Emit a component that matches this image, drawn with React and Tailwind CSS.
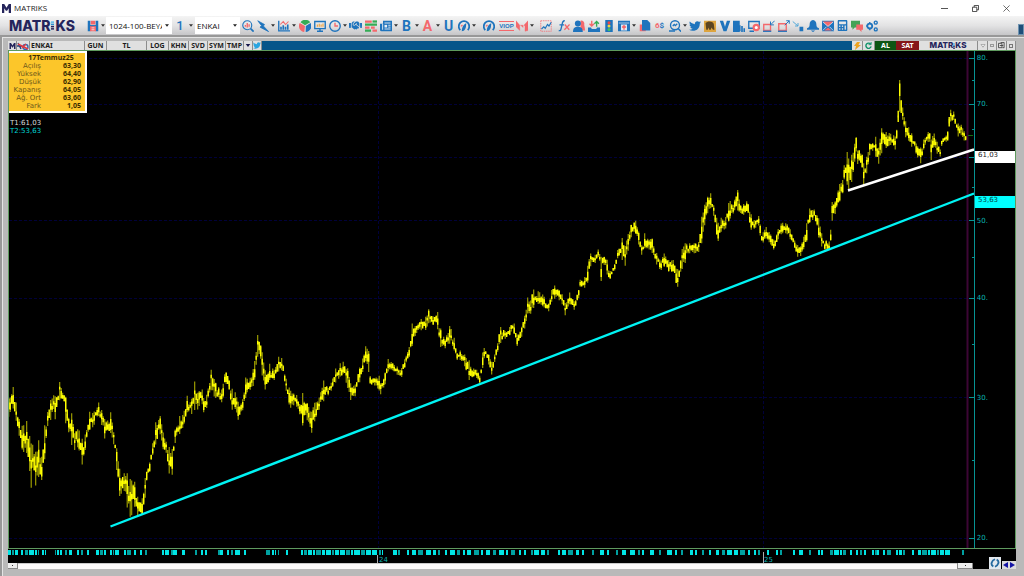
import React from "react";
import { FaHandshake, FaTwitter, FaBell, FaCalculator, FaNewspaper } from "react-icons/fa";

const BLUE = "#1f74bd";
const RED = "#f4686c";

/* Price ranges traced in thirds of a pixel: [x, high, low] relative to each section's origin. */
const SECTIONS = [
  { x: 0, y: 330, points: [[26,205,260],[40,170,235],[48,215,270],[58,270,320],[68,290,365],[82,270,370],[93,340,480],[99,345,400],[106,370,470],[115,325,440],[125,380,450],[133,290,400],[142,250,290],[152,210,270],[160,195,230],[167,200,278],[172,195,230],[181,145,215],[190,185,210],[197,200,280],[207,270,310],[215,250,345],[224,310,360],[235,295,350],[248,330,410],[257,310,350],[268,245,300],[280,250,290],[295,215,255],[305,240,285],[315,270,330],[322,275,300],[331,240,305],[343,320,350],[351,360,430],[361,430,515],[372,430,480],[382,430,535],[392,450,565],[404,455,530],[412,500,560],[427,505,555],[436,440,500],[442,405,455],[452,370,410],[458,340,375],[468,270,340],[480,255,310],[490,310,360],[500,340,370],[507,350,430],[516,360,440],[525,300,340],[540,255,310],[550,255,290],[562,195,245],[573,220,255],[583,150,240],[592,190,240],[605,170,215],[612,210,252],[622,190,230],[633,118,180],[645,155,205],[655,170,200],[667,180,220],[676,110,170],[685,130,170],[695,175,240],[705,185,235],[716,220,275],[727,215,245],[738,135,200],[750,145,180],[762,110,165],[773,15,80],[780,25,85],[787,70,140],[797,130,185],[808,100,150],[823,120,150],[835,80,125],[847,85,120],[858,145,180],[870,180,235],[880,190,225],[890,195,230],[900,225,255],[909,185,290],[922,220,270],[935,245,308],[945,215,270],[957,205,240],[970,150,215],[985,175,195],[995,155,180],[1005,115,160],[1017,120,145]] },
  { x: 340, y: 200, points: [[0,490,530],[10,485,520],[22,500,560],[32,550,600],[45,555,590],[58,505,550],[67,480,520],[76,437,480],[87,455,520],[92,535,560],[103,535,555],[117,525,570],[122,550,583],[135,520,555],[143,475,515],[157,490,510],[172,500,525],[183,510,537],[195,475,500],[208,440,470],[216,370,440],[228,380,400],[245,355,390],[257,350,390],[266,328,370],[280,350,375],[292,330,380],[300,380,440],[315,420,445],[330,375,430],[342,410,450],[350,460,480],[362,450,480],[375,465,500],[387,480,540],[400,505,530],[412,510,535],[420,530,552],[427,460,510],[434,440,465],[445,460,490],[457,490,530],[465,460,480],[473,430,455],[481,380,430],[497,395,415],[510,380,405],[521,365,395],[532,405,440],[545,380,410],[556,340,380],[562,290,340],[570,310,345],[580,268,325],[597,275,310],[610,285,320],[625,315,337],[635,270,305],[645,255,295],[657,270,300],[668,285,315],[675,310,347],[690,275,310],[703,305,330],[716,270,295],[719,240,260],[733,235,265],[745,190,245],[750,160,200],[765,165,190],[775,148,170],[780,165,185],[783,170,252],[786,170,200],[793,170,195],[802,180,225],[809,215,240],[825,190,210],[833,150,175],[847,113,180],[855,140,200],[865,100,150],[875,70,105],[887,62,100],[895,90,130],[906,140,168],[914,100,145],[925,120,145],[937,115,160],[948,155,190],[962,185,212],[972,160,200],[985,180,215],[1000,180,215],[1012,210,265],[1022,180,215]] },
  { x: 640, y: 70, points: [[125,540,600],[135,520,580],[148,520,550],[165,520,550],[178,515,545],[185,440,520],[195,400,460],[203,380,430],[212,370,415],[222,410,440],[229,440,490],[235,460,515],[245,440,480],[255,450,480],[268,390,450],[280,405,430],[291,350,420],[303,410,430],[313,400,435],[322,390,435],[332,430,480],[345,455,475],[358,435,465],[363,480,530],[368,490,520],[378,470,505],[390,490,520],[402,510,540],[413,480,510],[425,458,490],[440,460,490],[452,480,510],[463,510,530],[473,525,560],[480,535,562],[490,505,540],[500,460,515],[508,415,460],[518,420,450],[524,405,450],[535,440,500],[547,500,535],[557,510,540],[568,515,540],[573,470,505],[577,385,445],[587,395,430],[597,345,400],[608,330,370],[614,270,350],[620,240,340],[627,270,360],[637,250,330],[646,185,265],[655,225,290],[665,240,310],[671,280,345],[680,260,310],[690,215,250],[700,220,240],[707,200,260],[715,240,285],[725,175,250],[737,185,235],[750,190,225],[760,195,225],[766,200,240],[773,115,200],[779,30,125],[786,90,160],[795,150,200],[805,170,210],[815,190,230],[828,220,250],[841,235,285],[850,210,240],[865,185,215],[870,190,215],[873,210,275],[877,200,235],[883,190,230],[893,220,255],[901,240,260],[906,205,220],[920,195,215],[925,150,215],[930,118,155],[942,125,150],[953,160,200],[965,165,195],[975,190,225],[980,190,210]] },
];

const PRICES = SECTIONS.flatMap((s) => s.points.map(([x, hi, lo]) => [s.x + x / 3, s.y + hi / 3, s.y + lo / 3]));

function buildBars() {
  let seed = 7;
  const rnd = () => {
    seed = (seed * 16807) % 2147483647;
    return seed / 2147483647;
  };
  let wicks = "";
  let bodies = "";
  let k = 0;
  for (let x = PRICES[0][0]; x < PRICES[PRICES.length - 1][0]; x += 1.5) {
    while (k < PRICES.length - 2 && PRICES[k + 1][0] < x) k++;
    const [ax, ah, al] = PRICES[k];
    const [bx, bh, bl] = PRICES[k + 1];
    const t = Math.min(1, Math.max(0, (x - ax) / (bx - ax)));
    const near = t < 0.22 || t > 0.78;
    const hi = ah + (bh - ah) * t;
    const lo = al + (bl - al) * t;
    const size = lo - hi;
    const top = hi + (near ? 0 : rnd() * 0.5 * size);
    const bottom = lo - (near ? 0 : rnd() * 0.5 * size);
    const mid = top + (bottom - top) * (0.3 + rnd() * 0.4);
    const half = size * (0.04 + rnd() * 0.22) + 0.6;
    wicks += `M${x.toFixed(1)} ${top.toFixed(1)}V${bottom.toFixed(1)}`;
    bodies += `M${x.toFixed(1)} ${(mid - half).toFixed(1)}V${(mid + half).toFixed(1)}`;
  }
  return { wicks, bodies };
}
const BARS = buildBars();

const priceY = (p) => 57.5 + 346.25 * Math.log(80 / p);
const fromTop = (y) => ({ top: `${((y - 51) / 497) * 100}%` });
const MAJOR = [80, 70, 60, 50, 40, 30, 20];
const MINOR = [75, 65, 55, 45, 35, 25];

const SIGNALS = [
  [8,3],[12,2],[15,3],[21,2],[25,3],[29,5],[35,2],[38,1],[42,2],[45,1],[55,1],[57,2],[60,2],[65,2],[69,3],[77,2],[81,2],[87,2],[96,3],[100,3],[104,2],[110,2],[113,1],[115,4],[124,2],[127,4],[134,2],[140,2],[145,2],[162,2],[165,4],[171,2],[173,4],[182,3],[195,2],[201,2],[205,2],[218,2],[220,3],[227,2],[231,2],[235,5],[244,2],[266,4],[272,2],[275,1],[278,1],[286,2],
  [301,2],[304,3],[308,4],[313,2],[316,5],[322,3],[326,5],[332,2],[335,4],[340,5],[346,4],[351,2],[354,6],[361,4],[366,5],[372,5],[379,2],[382,1],[393,4],[398,2],
  [407,2],[412,4],[418,5],[426,5],[433,3],[438,2],[445,2],[450,5],[457,3],[463,2],[467,4],[474,5],[481,2],[486,4],[493,3],[499,5],[506,2],[511,4],[519,2],[524,2],[531,2],[534,5],[541,4],[547,2],[558,2],[562,4],[568,5],[576,3],[582,2],[592,2],[600,4],[607,2],[616,2],[622,4],[630,5],[638,2],[642,2],[650,4],[659,2],[667,5],[675,2],[681,2],[690,3],[695,2],[702,2],[709,2],[716,3],[722,3],[727,5],[734,4],[740,5],[748,2],[754,2],[758,2],
  [767,2],[776,2],[780,2],[793,2],[799,4],[809,2],[818,2],[821,2],[830,3],[834,5],[840,2],[843,3],[850,2],[856,2],[860,2],[864,2],[872,2],[875,2],[877,2],[883,2],[887,4],[896,2],[899,3],[903,2],[912,2],[918,3],[922,5],[928,2],[931,5],[937,2],[940,4],[945,5],[962,2],
];

function Svg({ children }) {
  return (
    <svg viewBox="0 0 16 16" className="h-3 w-3 shrink-0" fill="none" stroke={BLUE} strokeWidth="1.8" aria-hidden="true">
      {children}
    </svg>
  );
}

function Tool({ label, caret, children }) {
  return (
    <>
      <button type="button" aria-label={label} className="flex h-full w-[15px] shrink-0 items-center justify-center">
        {children}
      </button>
      {caret && <Caret label={label} />}
    </>
  );
}

function Caret({ label }) {
  return (
    <button type="button" aria-label={`${label} menu`} className="flex h-full w-[6px] shrink-0 items-center justify-center">
      <svg viewBox="0 0 6 4" className="h-[3px] w-1" fill="#333"><path d="M0 0h6L3 4z" /></svg>
    </button>
  );
}

function Logo({ small }) {
  return (
    <span role="img" aria-label="MATRIKS" className={small ? "flex items-center font-[Inter,sans-serif] text-[8px] leading-[9px] font-extrabold text-[#25255c]" : "flex items-center font-[Inter,sans-serif] text-[14px] leading-4 font-extrabold text-[#25255c]"}>
      MATR
      <svg viewBox="0 0 4 11" className={small ? "h-[6px] w-[2px]" : "mx-px h-[11px] w-[3px]"}>
        <path d="M0 0h4v2H0z" fill="#56b7e8" /><path d="M0 3h4v2H0z" fill="#2a8fd0" />
        <path d="M0 6h4v2H0z" fill="#25255c" /><path d="M0 9h4v2H0z" fill="#25255c" />
      </svg>
      KS
    </span>
  );
}

function MMark({ className }) {
  return (
    <svg viewBox="0 0 12 12" className={className} fill="#25255c" aria-hidden="true">
      <path d="M0 12V0h3l3 5 3-5h3v12H9V5.5L6.8 9H5.2L3 5.500V12z" />
    </svg>
  );
}

const Gauge = () => (
  <Svg>
    <path d="M3 13.500A7 7 0 1 1 13 13.500" strokeWidth="2.400" />
    <path d="M5 15c4 0 6-4 6-11-4 2-6 6-6 11z" fill={BLUE} stroke="none" />
    <path d="M4 8.500 6 6.500" stroke={RED} />
  </Svg>
);

function Toolbar() {
  return (
    <div className="flex h-[19px] items-center bg-linear-to-b from-[#f4f4f4] via-[#e3e3e4] to-[#c6c6c8] pl-[9px]">
      <div className="w-[76px] shrink-0"><Logo /></div>
      <Tool label="Kaydet" caret>
        <Svg>
          <path d="M1 1h3.500v14H1zM11.500 1H15v14h-3.500z" fill={BLUE} stroke="none" />
          <path d="M5 1h6v5H5zM4 8h8v7H4z" fill={RED} stroke="none" />
          <path d="M4 7.500h8" strokeWidth="1.500" />
          <path d="M6 10.500h4M6 13h4" stroke="#fff" strokeWidth="1" />
        </Svg>
      </Tool>
      <label className="flex h-[17px] w-[66px] shrink-0 items-center bg-white pl-[3px]">
        <select aria-label="Sayfa" className="w-[53px] appearance-none overflow-hidden bg-transparent font-['Open_Sans',sans-serif] text-[8px] leading-3 text-[#111]">
          <option>1024-100-BEYAZ</option>
        </select>
        <span className="flex grow justify-center"><svg viewBox="0 0 6 4" className="h-[3px] w-1" fill="#222"><path d="M0 0h6L3 4z" /></svg></span>
      </label>
      <button type="button" className="w-4 shrink-0 font-[Roboto,sans-serif] text-[13px] leading-4 font-medium text-[#1f74bd]">1</button>
      <Caret label="Grafik" />
      <label className="ml-px flex h-[17px] w-[45px] shrink-0 items-center bg-white pl-[2px]">
        <select aria-label="Sembol" className="w-[32px] appearance-none bg-transparent font-['Open_Sans',sans-serif] text-[8px] leading-3 text-[#111]">
          <option>ENKAI</option>
        </select>
        <span className="flex grow justify-center"><svg viewBox="0 0 6 4" className="h-[3px] w-1" fill="#222"><path d="M0 0h6L3 4z" /></svg></span>
      </label>
      <Tool label="Ara"><Svg><circle cx="7" cy="7" r="6" strokeWidth="1.500" /><path d="m11.500 11.500 4 4" strokeWidth="2.400" /><path d="M4.500 9V6.500M7 10V4M9.500 9V5.500" stroke={RED} /></Svg></Tool>
      <Tool label="Hızlı emir" caret><Svg><path d="M1 1l9 5-1.500 2 7 7.500L4 9.500 6 7.500z" fill={BLUE} stroke={BLUE} strokeWidth="1" /></Svg></Tool>
      <Tool label="Grafik" caret><Svg><path d="M1 1v13.500h15" /><path d="M4 13V9M7 13V7M10 13V9M13 13V6" strokeWidth="2.200" /><path d="m3 6 4-4 3 4 4-4" stroke={RED} strokeWidth="1.400" /></Svg></Tool>
      <Tool label="Dağılım"><Svg><path d="M8 8 1 4a8 8 0 0 0 6 12z" fill={RED} stroke="none" /><path d="M8 7 2 3a8 8 0 0 1 13 0z" fill="#35ac55" stroke="none" /><path d="m9 8 6.500-4A8 8 0 0 1 9 16z" fill={BLUE} stroke="none" /></Svg></Tool>
      <Tool label="Sunum"><Svg><path d="M1 2h14v9.500H1zM8 12v2M4 15h8" /><path d="M4.500 9V6M7 9V5M9.500 9V6M12 9V4.500" stroke="#f2a33a" strokeWidth="1.500" /></Svg></Tool>
      <Tool label="Saat" caret><Svg><circle cx="8" cy="8" r="7" /><path d="M8 3.500V8h4" stroke={RED} /></Svg></Tool>
      <Tool label="İşlem"><FaHandshake size={13} color={BLUE} /></Tool>
      <Tool label="Derinlik"><Svg><path d="M0 2h9M0 10h6" stroke={RED} strokeWidth="3" /><path d="M0 6h16M0 14h8" stroke="#35ac55" strokeWidth="3" /><path d="M10 2h6" stroke="#35ac55" strokeWidth="3" /><path d="M8 10h5M10 14h6" stroke={RED} strokeWidth="3" /></Svg></Tool>
      <Tool label="Haber" caret>
        <Svg><path d="M4 1h12v14H2a2 2 0 0 1-2-2V5h4z" fill={BLUE} stroke="none" /><path d="M6 4h8M6 12h8M11 7h3M11 9.500h3M3.500 5v8" stroke="#e9eef5" strokeWidth="1.200" /><path d="M6 6.500h3.500v3.500H6z" fill="#e9eef5" stroke="none" /></Svg>
      </Tool>
      <Tool label="Bülten" caret><span className="font-[Roboto,sans-serif] text-[14px] leading-4 font-bold text-[#1f74bd]">B</span></Tool>
      <Tool label="Analiz" caret><span className="font-[Roboto,sans-serif] text-[14px] leading-4 font-bold text-[#f4686c]">A</span></Tool>
      <Tool label="Uyarı"><span className="font-[Roboto,sans-serif] text-[14px] leading-4 font-bold text-[#1f74bd]">U</span></Tool>
      <Tool label="Gösterge" caret><Gauge /></Tool>
      <span className="w-1 shrink-0" />
      <Tool label="Performans"><Gauge /></Tool>
      <span className="w-[3px] shrink-0" />
      <Tool label="VIOP">
        <span className="flex flex-col items-center border-y border-[#f4686c] font-['Liberation_Sans_Narrow',sans-serif] text-[6px] leading-[8px] font-bold text-[#1f74bd]">VIOP</span>
      </Tool>
      <Tool label="Matriks" caret><Svg><path d="M0 1l5 6v7l-5-5zM6 7l3.500 3V7zM10.500 7 16 1v13l-4 1V8z" fill={RED} stroke={RED} strokeWidth=".5" /></Svg></Tool>
      <span className="w-[3px] shrink-0" />
      <Tool label="Gösterge grafiği"><Svg><path d="M1 1h14v14H1z" stroke={RED} strokeWidth="1" strokeDasharray="2 1" /><path d="m2 12 3-3 2 2 3-5 2 2 3-5" strokeWidth="1.500" /></Svg></Tool>
      <span className="w-[3px] shrink-0" />
      <Tool label="Formül"><Svg><path d="M9 1C5.500.500 6 4 5 8s-1 7-4 6M2 6.500h6" /><path d="m9 6 6 7M15.500 6l-7 7" stroke={RED} /></Svg></Tool>
      <Tool label="Kullanıcı"><Svg><path d="M10 1a4 4 0 0 1 5 5c0 2 1 4 1 8h-6z" fill={RED} stroke="none" /><circle cx="6.500" cy="4.500" r="4" fill={BLUE} stroke="none" /><path d="M0 16c0-6 3-7 6.500-7S13 10 13 16z" fill={BLUE} stroke="none" /></Svg></Tool>
      <Tool label="Transfer"><Svg><path d="M0 10v6h16v-6h-4l-1 2H5l-1-2z" fill={BLUE} stroke="none" /><path d="M5 1v7M2 5l3 3 3-3" stroke={RED} /><path d="M11.500 9V2M8.500 5l3-3 3 3" stroke="#35ac55" /></Svg></Tool>
      <Tool label="Sinyal"><Svg><path d="M3 0h10v16H3z" fill={BLUE} stroke="none" /><circle cx="8" cy="3.500" r="2" fill="#ee4545" stroke="none" /><circle cx="8" cy="8" r="2" fill="#f6d53c" stroke="none" /><circle cx="8" cy="12.500" r="2" fill="#43c45e" stroke="none" /></Svg></Tool>
      <Tool label="Takvim" caret><Svg><path d="M0 1h16v14H0z" fill={BLUE} stroke="none" /><path d="M1 4h14" stroke="#d5e6f5" strokeWidth="1" /><path d="M4 6h8v8H4z" fill="#dbe9f5" stroke="none" /><path d="M8 13V8M5.500 10 8 7.500l2.500 2.500" stroke={RED} /></Svg></Tool>
      <Tool label="Kopyala"><Svg><path d="M1 6h8v9H1z" fill={RED} stroke="none" /><path d="M4 0h7l4 4v10H4z" fill={BLUE} stroke="none" /></Svg></Tool>
      <Tool label="Kur"><span className="font-[Roboto,sans-serif] text-[8px] leading-3 font-bold text-[#f4686c]">6<span className="text-[#1f74bd]">$</span></span></Tool>
      <Tool label="Tarama" caret><Svg><circle cx="8" cy="7" r="6" /><path d="M5 8l2-2 1.500 1.500L11 5" /><path d="m12 11 4 4.500M0 14.500h8" strokeWidth="2" /></Svg></Tool>
      <div className="flex h-full w-[191px] shrink-0 justify-between *:w-[14px]">
        <Tool label="Twitter"><FaTwitter size={12} color={BLUE} /></Tool>
        <Tool label="Boğa"><Svg><path d="M0 1h16v15H0z" fill="#dda43f" stroke="none" /><path d="M2 4c3-3 9-3 11 1l1 8h-2l-2-3-1 3H7l-1-3-1 3H3z" fill="#5b4420" stroke="none" /></Svg></Tool>
        <Tool label="Veri"><Svg><path d="M1 1h4.500L8 9l2.500-8H15l-5 14H6z" fill={BLUE} stroke="none" /></Svg></Tool>
        <Tool label="Rapor"><Svg><path d="M0 1h9v15H0z" fill={BLUE} stroke="none" /><path d="M6 15V9M9 15V7M12 16V8M15 16v-5" strokeWidth="2.200" /></Svg></Tool>
        <Tool label="Ekran ayarı"><Svg><path d="M1 2h14v9H1zM2 15h6" /><circle cx="11" cy="10" r="3.500" stroke={RED} strokeWidth="2.800" fill="#fff" /></Svg></Tool>
        <Tool label="Küçült"><Svg><path d="M1 6h9v8H1z" stroke={RED} /><path d="m15.500 1-5 5M10 2v4.500h4.500" strokeWidth="1.300" /><path d="M0 15h11" /></Svg></Tool>
        <Tool label="Büyüt"><Svg><path d="M1 5h10v9H1z" stroke={RED} /><path d="m9 7 6-6M11 1h4v4" strokeWidth="1.300" /><path d="M0 15h12" /></Svg></Tool>
        <Tool label="Taşı"><Svg><path d="m1 2 7 6M8 4v4H4" stroke="#52a8d8" strokeWidth="1.300" /><path d="M10 9h5v6h-5z" fill={BLUE} stroke="none" /></Svg></Tool>
        <Tool label="Alarm"><Svg><path d="M8 0c3 0 4.500 3 4.500 6s1 4 3.500 5v2H0v-2c2.500-1 3.500-2 3.500-5S5 0 8 0zM5 14h6l-3 2z" fill={BLUE} stroke="none" /></Svg></Tool>
        <Tool label="Mesaj"><Svg><path d="M0 1h16v14H0z" fill={BLUE} stroke="none" /><path d="M1 2h14L8 9zM3 14l5-4 5 4z" fill={RED} stroke="none" /><path d="m1 2.500 7 6 7-6M1 14l5-5M15 14l-5-5" stroke="#e8eef5" strokeWidth="1" /></Svg></Tool>
        <Tool label="Hesap makinesi"><FaCalculator size={11} color={BLUE} /></Tool>
        <Tool label="Sohbet"><Svg><path d="M0 1h12v9H5l-3 3V10H0z" fill="#45a356" stroke="none" /><path d="M7 6h9v7h-2v3l-3-3H7z" fill={RED} stroke="none" /></Svg></Tool>
        <Tool label="Ayarlar"><Svg><circle cx="5" cy="8" r="3.300" strokeWidth="2.400" /><path d="M5 2.500V4M5 12v1.500M0 8h1" /><circle cx="13" cy="3.500" r="2" /><circle cx="13" cy="12.500" r="2" /></Svg></Tool>
      </div>
      <span className="mt-2 ml-auto h-[11px] w-[6px] border border-[#6f93b0] bg-[#1f4e79]" />
    </div>
  );
}

const CELLS = [
  ["GUN", "w-[22px]"], ["TL", "w-[40px]"], ["LOG", "w-[22px]"], ["KHN", "w-[20px]"],
  ["SVD", "w-[19px]"], ["SYM", "w-[18px]"], ["TMP", "w-[18px]"],
];
const cell = "flex h-[9px] shrink-0 items-center justify-center border-r border-[#8d8d8d] bg-[#e0e0e0]";

function ChartHeader() {
  return (
    <div className="flex h-[9px] bg-[#06558a] font-['Noto_Sans',sans-serif] text-[7px] leading-[9px] font-bold text-[#1c1c1c]">
      <div className={`${cell} w-[9px]`}><MMark className="h-[6px] w-[7px]" /></div>
      <button type="button" aria-label="Bağlantı" className={`${cell} w-[13px]`}>
        <svg viewBox="0 0 12 8" className="h-2 w-3" fill="none" strokeWidth="1.400">
          <path d="M1 1l3 6M0 4h5" stroke="#25407c" /><circle cx="8.500" cy="5" r="2.500" stroke="#3468b0" /><path d="M1 2l10 5M5 6l4-4" stroke="#e23b43" />
        </svg>
      </button>
      <div className={`${cell} w-[55px] !justify-start pl-px`}>ENKAI</div>
      {CELLS.map(([name, width]) => (
        <button key={name} type="button" className={`${cell} ${width}`}>{name}</button>
      ))}
      <button type="button" aria-label="Liste" className={`${cell} w-[9px]`}>
        <svg viewBox="0 0 6 4" className="h-[3px] w-[6px]" fill="#15154a"><path d="M0 0h6L3 4z" /></svg>
      </button>
      <button type="button" aria-label="Paylaş" className={`${cell} w-[9px]`}><FaTwitter size={9} color="#2aa5e0" /></button>
      <span className="grow" />
      <button type="button" aria-label="Hızlı" className={`${cell} w-[11px]`}>
        <svg viewBox="0 0 8 8" className="h-2 w-2" fill="#eea321"><path d="M4 0h3L5.500 3H8L2 8l1-4H1z" /></svg>
      </button>
      <button type="button" aria-label="Yenile" className={`${cell} w-[12px]`}>
        <svg viewBox="0 0 8 8" className="h-[7px] w-[7px]" fill="none" stroke="#12936a" strokeWidth="1.600"><path d="M6.500 2.500A3 3 0 1 0 7 5" /><path d="M7 0v3H4" strokeWidth="1" /></svg>
      </button>
      <button type="button" className="h-[9px] w-[21px] shrink-0 bg-[#0c5513] text-white">AL</button>
      <button type="button" className="h-[9px] w-[23px] shrink-0 bg-[#861418] text-white">SAT</button>
      <div className={`${cell} w-[59px]`}><Logo small /></div>
      <button type="button" aria-label="Aşağı" className={`${cell} w-[10px]`}><svg viewBox="0 0 6 5" className="h-[4px] w-[6px]" fill="#fff" stroke="#999"><path d="M.5.5h5L3 4z" /></svg></button>
      <button type="button" aria-label="Simge" className={`${cell} w-[9px]`}><span className="h-[3px] w-1 border border-[#999]" /></button>
      <button type="button" aria-label="Pencere" className={`${cell} w-[10px]`}><svg viewBox="0 0 8 8" className="h-[7px] w-[7px]" fill="none" stroke="#444"><path d="M.5 1.500h4v5h-4zM3 .5h4v6H5M2 4h4" /></svg></button>
      <button type="button" aria-label="Büyüt" className={`${cell} w-[9px]`}><span className="size-1 border border-[#777]" /></button>
    </div>
  );
}

const QUOTE = [
  ["Açılış", "63,30"], ["Yüksek", "64,40"], ["Düşük", "62,90"],
  ["Kapanış", "64,05"], ["Ağ. Ort", "63,60"], ["Fark", "1,05"],
];

function Chart() {
  return (
    <div className="relative min-h-0 grow border border-[#5e9a5e] bg-black font-['DejaVu_Sans',sans-serif] text-[7px] leading-[8px]">
      <svg viewBox="9 51 1006 497" preserveAspectRatio="none" className="absolute inset-0 h-full w-full" fill="none" role="img" aria-label="ENKAI günlük grafik">
        <g stroke="#00003a" strokeWidth="1" strokeDasharray="3 2">
          {MAJOR.map((p) => <path key={p} d={`M9 ${Math.round(priceY(p)) + 0.5}H967`} />)}
          <path d="M378.500 51V548M763.500 51V548" />
        </g>
        <path d="M967.500 51V548" stroke="#3c0635" strokeWidth="2" />
        <path d={BARS.wicks} stroke="#a8a800" strokeWidth="1.100" />
        <path d={BARS.bodies} stroke="#ffff00" strokeWidth="1.400" />
        <path d="M968 135.500h5" stroke="#136c13" />
        <path d="M110.500 526.500 974 193.500" stroke="#00f4f4" strokeWidth="2.400" />
        <path d="M848 190.500 974 149.500" stroke="#fff" strokeWidth="2.400" />
        <g stroke="#079393">
          <path d="M974.500 51V548" />
          {MAJOR.map((p) => <path key={p} d={`M969 ${Math.round(priceY(p)) + 0.5}h6`} />)}
          {MINOR.map((p) => <path key={p} d={`M972 ${Math.round(priceY(p)) + 0.5}h3`} />)}
        </g>
      </svg>
      {MAJOR.filter((p) => p !== 60).map((p) => (
        <span key={p} className="absolute right-[27px] -translate-y-1/2 text-[#0ab4b4]" style={fromTop(priceY(p) + 0.5)}>{p}.</span>
      ))}
      <span className="absolute right-0 h-3 w-10 bg-white pl-[3px] text-[#222]" style={fromTop(151)}>61,03</span>
      <span className="absolute right-0 h-3 w-10 bg-[#00ffff] pl-[3px] text-[#044]" style={fromTop(196)}>53,63</span>
      <div className="absolute top-0 left-0 w-[78px] border-2 border-l-0 border-white bg-[#fcc62a] px-1 py-px text-[#3b2d00]">
        <div className="pl-2 text-center font-['Noto_Sans',sans-serif] font-bold">17Temmuz25</div>
        <table className="w-full">
          <tbody>
            {QUOTE.map(([name, value]) => (
              <tr key={name}>
                <th scope="row" className="w-7 p-0 text-right font-normal whitespace-nowrap text-[#6f5a1b]">{name}</th>
                <td className="p-0 text-right font-['Noto_Sans',sans-serif] font-bold">{value}</td>
              </tr>
            ))}
          </tbody>
        </table>
      </div>
      <div className="absolute top-[68px] left-px">
        <div className="text-[#dcdcdc]">T1:61,03</div>
        <div className="text-[#00d4d4]">T2:53,63</div>
      </div>
    </div>
  );
}

function Timeline() {
  return (
    <div className="flex h-5 shrink-0 items-end bg-black">
      <div className="flex grow flex-col self-stretch">
        <svg viewBox="8 549 965 14" preserveAspectRatio="none" className="h-[14px] w-full" fontFamily="DejaVu Sans, sans-serif" fontSize="7" fill="#0ab4b4">
          <g fill="#00e5e5">
            {SIGNALS.map(([x, w], i) => <rect key={x} x={x} y="550" width={w} height="5" opacity={i % 3 === 1 ? 0.7 : 1} />)}
          </g>
          <path d="M377 555h1v8h-1zM763 552h1v11h-1z" fill="#aaa" />
          <text x="379" y="562">24</text>
          <text x="764" y="562">25</text>
        </svg>
        <div className="flex h-[6px] bg-white">
          <button type="button" aria-label="Sola kaydır" className="flex w-[10px] items-center justify-center border-r border-b border-[#888] bg-[#eee]"><span className="size-px bg-[#333]" /></button>
          <span className="grow border-t border-[#c9c9c9] bg-[#fbf9f9]" />
          <button type="button" aria-label="Sağa kaydır" className="flex w-4 items-center justify-center border-r border-b border-l border-[#888] bg-[#eee]"><span className="size-px bg-[#333]" /></button>
        </div>
      </div>
      <button type="button" aria-label="Eşitle" className="ml-4 flex h-3 w-3 items-center justify-center bg-[#e2e8ee]">
        <svg viewBox="0 0 12 12" className="h-[10px] w-[10px]" fill="none" stroke="#24699f" strokeWidth="2.200"><path d="M4 10C0 8 2 3 6 1.500M8 2c4 2 2 7-2 8.500" /></svg>
      </button>
      <div className="ml-px flex h-2 w-[14px] bg-[#dcdcdc]">
        <button type="button" aria-label="Geri" className="flex w-[7px] items-center justify-center"><svg viewBox="0 0 5 6" className="h-[6px] w-[5px]" fill="#1515a5"><path d="M5 0v6L0 3z" /></svg></button>
        <button type="button" aria-label="İleri" className="flex w-[7px] items-center justify-center"><svg viewBox="0 0 5 6" className="h-[6px] w-[5px]" fill="#1515a5"><path d="M0 0v6l5-3z" /></svg></button>
      </div>
    </div>
  );
}

export default function App() {
  return (
    <div className="flex h-screen flex-col overflow-hidden bg-white">
      <header className="flex h-4 shrink-0 items-center pl-[2px] font-['Open_Sans',sans-serif] text-[8px] leading-4 text-[#222]">
        <MMark className="mr-[3px] h-[9px] w-[9px]" />
        MATRIKS
        <div className="ml-auto flex gap-5 pr-[12px]">
          <button type="button" aria-label="Küçült" className="flex size-[11px] items-center justify-center"><span className="h-px w-[7px] bg-[#555]" /></button>
          <button type="button" aria-label="Geri yükle" className="flex size-[11px] items-center justify-center">
            <svg viewBox="0 0 8 8" className="size-[7px]" fill="none" stroke="#333"><path d="M.5 2.500h5v5h-5zM2.500 2.500v-2h5v5h-2" /></svg>
          </button>
          <button type="button" aria-label="Kapat" className="flex size-[11px] items-center justify-center">
            <svg viewBox="0 0 8 8" className="size-[7px]" fill="none" stroke="#333" strokeWidth=".8"><path d="m.5.5 7 7M7.500.5l-7 7" /></svg>
          </button>
        </div>
      </header>
      <Toolbar />
      <main className="flex min-h-0 grow flex-col border-t-2 border-l-2 border-[#989898] bg-[#b9b9b9]">
        <div className="flex min-h-0 grow flex-col border-t border-l border-[#e4e4e4] pt-[3px] pr-2 pb-[7px] pl-[5px]">
          <ChartHeader />
          <Chart />
          <Timeline />
        </div>
      </main>
    </div>
  );
}
